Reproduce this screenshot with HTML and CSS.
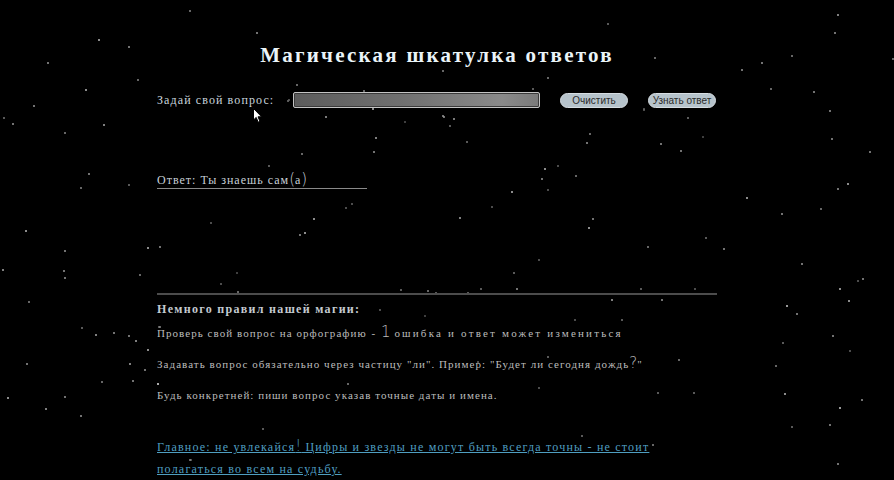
FILE: index.html
```html
<!DOCTYPE html>
<html lang="ru">
<head>
<meta charset="utf-8">
<title>Магическая шкатулка ответов</title>
<link rel="stylesheet" href="styles.css">
</head>
<body>
<div class="sky"></div>
<div class="page">
  <h1 class="title">Магическая шкатулка ответов</h1>
  <div class="ask">
    <label class="ask-label" for="q">Задай свой вопрос:</label>
    <input class="ask-input" id="q" type="text">
    <button class="btn" type="button">Очистить</button>
    <button class="btn" type="button">Узнать ответ</button>
  </div>
  <div class="answer">Ответ: Ты знаешь сам<span class="alt">(</span>а<span class="alt">)</span></div>
  <hr class="divider">
  <h2 class="rules-title">Немного правил нашей магии:</h2>
  <p class="rule">Проверь свой вопрос на орфографию <span class="dash">-</span> <span class="alt one">1</span> <span class="wide">ошибка и ответ может измениться</span></p>
  <p class="rule">Задавать вопрос обязательно через частицу "ли". Пример: "Будет ли сегодня дождь<span class="alt">?</span>"</p>
  <p class="rule">Будь конкретней: пиши вопрос указав точные даты и имена.</p>
  <p class="note"><a class="note-link" href="#">Главное: не увлекайся<span class="alt">!</span> Цифры и звезды не могут быть всегда точны - не стоит полагаться во всем на судьбу.</a></p>
</div>
<svg class="cursor" width="10" height="16" viewBox="0 0 10 16"><path d="M0.5 0.5 L0.5 12 L3.2 9.4 L5.2 14.2 L7 13.4 L5 8.8 L8.6 8.8 Z" fill="#fff" stroke="#000" stroke-width="1"/></svg>
</body>
</html>
```
FILE: styles.css
```css
html, body {
  margin: 0;
  padding: 0;
  background: #000;
}
body {
  font-family: "Liberation Serif", "Times New Roman", serif;
  color: #c4ccd2;
  min-height: 480px;
  overflow: hidden;
}
.sky {
  position: absolute;
  left: 0;
  top: 0;
  width: 2px;
  height: 2px;
  border-radius: 50%;
  z-index: 0;
  box-shadow:
    189px 10px #888, 256px 32px #999, 98px 39px #bbb, 128px 46px #999, 47px 62px #999,
    137px 79px #888, 85px 89px #bbb, 33px 105px #999, 3px 117px #777, 12px 123px #999,
    103px 124px #aaa, 64px 132px #888, 296px 84px #888, 288px 99px #666,
    837px 14px #aaa, 834px 32px #999, 607px 23px #777, 654px 57px #888, 791px 55px #888,
    761px 62px #999, 741px 69px #999, 892px 58px #888, 770px 88px #888, 813px 91px #999,
    829px 110px #999, 643px 108px #666, 687px 117px #666, 660px 143px #999, 680px 150px #999,
    702px 136px #555, 831px 138px #999, 869px 151px #999, 847px 183px #bbb, 837px 188px #999,
    746px 197px #bbb, 781px 213px #999, 820px 208px #888, 705px 237px #777,
    647px 246px #888, 723px 248px #999, 801px 263px #999, 862px 278px #999, 857px 280px #666,
    839px 288px #bbb, 848px 300px #bbb, 786px 305px #ccc, 796px 313px #999, 661px 299px #999,
    694px 288px #666, 621px 319px #777, 832px 335px #999, 782px 342px #777, 849px 350px #666,
    775px 365px #888, 678px 359px #888, 784px 393px #bbb, 693px 392px #777, 861px 399px #999,
    839px 407px #ccc, 829px 424px #999, 791px 426px #777, 652px 444px #888, 837px 463px #999,
    88px 173px #999, 80px 187px #888, 128px 184px #777, 268px 165px #777, 25px 230px #bbb,
    64px 250px #999, 147px 247px #bbb, 159px 246px #999, 2px 269px #aaa, 63px 270px #999,
    64px 277px #999, 139px 274px #888, 210px 222px #666, 299px 234px #999, 236px 272px #555,
    220px 283px #666, 247px 293px #777, 28px 301px #888, 81px 327px #777, 95px 334px #aaa,
    113px 332px #999, 128px 335px #999, 135px 340px #aaa, 147px 349px #bbb, 26px 363px #999,
    129px 363px #aaa, 144px 369px #999, 101px 381px #888, 132px 380px #999, 157px 383px #bbb,
    7px 397px #bbb, 64px 396px #999, 45px 408px #aaa, 80px 415px #999, 262px 428px #777,
    189px 459px #888, 159px 326px #888,
    325px 116px #888, 372px 108px #999, 442px 115px #999, 453px 118px #888, 449px 125px #777,
    375px 137px #aaa, 373px 151px #999, 466px 141px #777, 404px 121px #555, 589px 133px #888,
    586px 142px #999, 544px 168px #bbb, 557px 165px #666, 541px 178px #999, 575px 175px #888,
    547px 189px #666, 511px 191px #bbb, 491px 206px #666, 345px 207px #666, 351px 203px #666,
    313px 218px #bbb, 304px 232px #bbb, 459px 217px #aaa, 592px 218px #999, 588px 227px #bbb,
    538px 259px #666, 513px 272px #777, 516px 288px #999, 427px 290px #888, 467px 292px #777,
    301px 153px #888, 237px 291px #888, 400px 289px #777, 435px 292px #777, 480px 288px #777,
    640px 288px #777, 611px 299px #aaa, 379px 309px #666, 424px 315px #555, 574px 319px #666,
    158px 326px #777, 547px 356px #777, 157px 383px #aaa, 347px 383px #888, 538px 387px #666,
    657px 392px #777, 477px 361px #666, 581px 435px #777, 190px 459px #666,
    363px 90px #888, 304px 98px #999, 287px 100px #777, 372px 108px #888, 325px 116px #777,
    443px 116px #999, 442px 70px #888, 547px 77px #888, 532px 88px #777, 643px 109px #666,
    687px 117px #555, 453px 118px #666;
}
.page {
  position: relative;
  z-index: 1;
  width: 560px;
  margin-left: 157px;
  padding-top: 42px;
}
.title {
  margin: 0;
  font-size: 21px;
  line-height: 26px;
  font-weight: bold;
  letter-spacing: 2.25px;
  text-align: center;
  color: #eaf4f8;
}
.ask {
  display: flex;
  align-items: center;
  gap: 20px;
  height: 16px;
  margin-top: 24px;
}
.ask-label {
  flex: 0 0 116px;
  min-width: 0;
  white-space: nowrap;
  font-size: 12px;
  letter-spacing: 1.1px;
  line-height: 16px;
  color: #c8d4dc;
}
.ask-input {
  box-sizing: border-box;
  flex: 0 0 247px;
  width: 247px;
  height: 16px;
  margin: 0;
  padding: 0;
  border: 1px solid #c4c4c4;
  border-radius: 2px;
  background: linear-gradient(to right, #5c5c5c, #707070 45%, #8a8a8a 85%, #7a7a7a);
  box-shadow: inset 0 0 0 1px #3a3a3a;
}
.btn {
  box-sizing: border-box;
  flex: 0 0 68px;
  width: 68px;
  height: 15px;
  margin: 0;
  padding: 0;
  border: 1px solid #d6dde2;
  border-radius: 8px;
  background: #b6c3cb;
  font-family: "Liberation Sans", Arial, sans-serif;
  font-size: 10px;
  line-height: 13px;
  color: #2a2a2a;
}
.answer {
  width: 210px;
  margin-top: 64px;
  font-size: 12px;
  line-height: 16px;
  letter-spacing: 1px;
  color: #c8d0d8;
  border-bottom: 1px solid #8a8a8a;
}
.alt {
  font-family: "DejaVu Sans", sans-serif;
  font-weight: 300;
  font-size: 15px;
  line-height: 1;
  letter-spacing: 0;
}
.dash {
  margin: 0 1px;
}
.one {
  margin: 0;
}
.wide {
  letter-spacing: 2.2px;
}
.divider {
  margin: 104px 0 0;
  height: 0;
  border: 0;
  border-top: 2px solid #4c4c4c;
}
.rules-title {
  margin: 6px 0 0;
  font-size: 12px;
  line-height: 16px;
  font-weight: bold;
  letter-spacing: 1.3px;
  color: #c4cad0;
}
.rule {
  margin: 8px 0 0;
  font-size: 11px;
  line-height: 16px;
  letter-spacing: 1.05px;
  color: #bcbcbc;
}
.rule + .rule {
  margin-top: 15px;
}
.note {
  margin: 33px 0 0;
  font-size: 12px;
  line-height: 22px;
  letter-spacing: 1.2px;
}
.note-link {
  color: #4f9ec0;
  text-decoration: underline;
}
.cursor {
  position: absolute;
  left: 253px;
  top: 108px;
  z-index: 2;
}
```
